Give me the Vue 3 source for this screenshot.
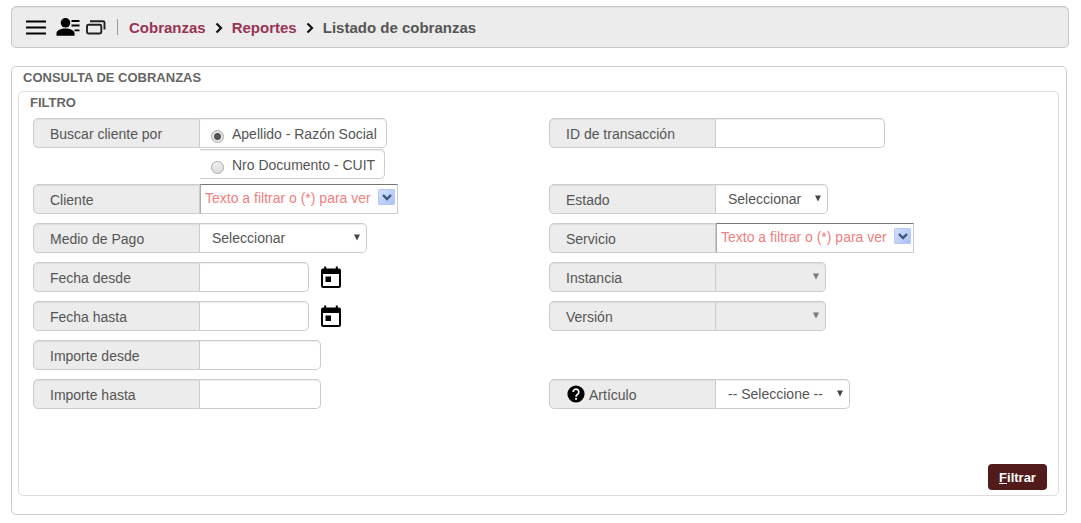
<script setup>
import { ref } from 'vue'

const searchBy = ref('apellido')
const searchOptions = [
  { id: 'apellido', text: 'Apellido - Razón Social' },
  { id: 'documento', text: 'Nro Documento - CUIT' },
]

const leftFields = [
  { id: 'cliente', label: 'Cliente', type: 'combo' },
  { id: 'medio', label: 'Medio de Pago', type: 'select', size: 'wide', text: 'Seleccionar' },
  { id: 'fecha-desde', label: 'Fecha desde', type: 'date' },
  { id: 'fecha-hasta', label: 'Fecha hasta', type: 'date' },
  { id: 'importe-desde', label: 'Importe desde', type: 'text', size: 'amount' },
  { id: 'importe-hasta', label: 'Importe hasta', type: 'text', size: 'amount' },
]

const rightFields = [
  { id: 'transaccion', label: 'ID de transacción', type: 'text', size: 'wide' },
  { id: 'estado', label: 'Estado', type: 'select', size: 'small', text: 'Seleccionar' },
  { id: 'servicio', label: 'Servicio', type: 'combo' },
  { id: 'instancia', label: 'Instancia', type: 'select', size: 'short', text: '', disabled: true },
  { id: 'version', label: 'Versión', type: 'select', size: 'short', text: '', disabled: true },
  { id: 'vacio', type: 'empty' },
  { id: 'articulo', label: 'Artículo', type: 'select', size: 'medium', text: '-- Seleccione --', help: true },
]

const columns = [leftFields, rightFields]
</script>

<template>
  <div class="page">
    <header class="topbar">
      <button class="icon-button menu" type="button" aria-label="Menú">
        <svg width="20" height="15" viewBox="0 0 20 15">
          <path d="M0 1.5h20M0 7.5h20M0 13.5h20" stroke="#000" stroke-width="2.2" />
        </svg>
      </button>
      <button class="icon-button user" type="button" aria-label="Usuario">
        <svg width="24" height="20" viewBox="0 0 24 20">
          <circle cx="9.5" cy="5.8" r="4.8" />
          <path d="M0.5 18.8v-2.6c0-3 4.5-4.7 9-4.7s9 1.7 9 4.7v2.6z" />
          <path d="M15.5 4h8M15.5 8.5h8M18.5 13.3h5" stroke="#000" stroke-width="1.8" />
        </svg>
      </button>
      <button class="icon-button windows" type="button" aria-label="Ventanas">
        <svg width="20" height="15" viewBox="0 0 20 15" fill="none" stroke="#222" stroke-width="1.9">
          <rect x="1" y="4.7" width="14.3" height="8.8" rx="1.5" />
          <path d="M4 1.3h13a1.5 1.5 0 0 1 1.5 1.5v6.7" />
        </svg>
      </button>
      <span class="divider"></span>
      <nav class="crumbs" aria-label="Ruta">
        <a href="#cobranzas">Cobranzas</a>
        <svg width="8" height="12" viewBox="0 0 8 12"><path d="M1.5 1.5L6 6L1.5 10.5" fill="none" stroke="#111" stroke-width="2.2" /></svg>
        <a href="#reportes">Reportes</a>
        <svg width="8" height="12" viewBox="0 0 8 12"><path d="M1.5 1.5L6 6L1.5 10.5" fill="none" stroke="#111" stroke-width="2.2" /></svg>
        <span>Listado de cobranzas</span>
      </nav>
    </header>

    <main class="panel">
      <h1 class="title">CONSULTA DE COBRANZAS</h1>
      <form class="filter" @submit.prevent>
        <h2 class="title">FILTRO</h2>
        <div class="columns">
          <div v-for="(fields, index) in columns" :key="index" class="column">
            <div v-if="index === 0" class="row first" role="radiogroup" aria-labelledby="buscar">
              <span id="buscar" class="label">Buscar cliente por</span>
              <div class="options">
                <label v-for="option in searchOptions" :key="option.id" class="option">
                  <input v-model="searchBy" type="radio" name="buscar" :value="option.id" />
                  <span>{{ option.text }}</span>
                </label>
              </div>
            </div>

            <div
              v-for="(field, n) in fields"
              :key="field.id"
              class="row"
              :class="{ first: index === 1 && n === 0 }"
            >
              <template v-if="field.type !== 'empty'">
                <label class="label" :for="field.id">
                  <svg v-if="field.help" class="help" width="18" height="18" viewBox="0 0 18 18">
                    <circle cx="9" cy="9" r="8.6" />
                    <path d="M6.2 7a2.8 2.8 0 1 1 4.8 1.9C9.9 9.9 9 10.3 9 11.8" fill="none" stroke="#fff" stroke-width="1.7" />
                    <rect x="8.1" y="13" width="1.8" height="1.8" fill="#fff" />
                  </svg>
                  {{ field.label }}
                </label>

                <div v-if="field.type === 'combo'" class="combo">
                  <input :id="field.id" type="text" placeholder="Texto a filtrar o (*) para ver" />
                  <button class="drop" type="button" :aria-label="'Ver ' + field.label">
                    <svg width="10" height="7" viewBox="0 0 10 7"><path d="M1 1l4 4l4-4" fill="none" stroke="#3f5577" stroke-width="2.4" /></svg>
                  </button>
                </div>

                <div v-else-if="field.type === 'select'" class="select" :class="field.size">
                  <select :id="field.id" :disabled="field.disabled">
                    <option>{{ field.text }}</option>
                  </select>
                  <svg class="arrow" width="6" height="7" viewBox="0 0 6 7"><path d="M0 0.5h6l-3 6z" /></svg>
                </div>

                <template v-else>
                  <input :id="field.id" class="text" :class="field.size" type="text" />
                  <button v-if="field.type === 'date'" class="icon-button calendar" type="button" :aria-label="'Calendario ' + field.label">
                    <svg width="22" height="23" viewBox="0 0 22 23">
                      <path d="M4.2 0.5h2v2h9.6v-2h2v2h1.2a2 2 0 0 1 2 2v15.5a2 2 0 0 1-2 2h-16a2 2 0 0 1-2-2v-15.5a2 2 0 0 1 2-2h1.2zM3 8v12h16v-12z" fill-rule="evenodd" />
                      <rect x="5.5" y="10.5" width="5.5" height="5.5" />
                    </svg>
                  </button>
                </template>
              </template>
            </div>
          </div>
        </div>
        <div class="actions">
          <button class="submit" type="submit"><u>F</u>iltrar</button>
        </div>
      </form>
    </main>
  </div>
</template>

<style>
body {
  background: #fff;
}
</style>

<style scoped>
.page {
  padding: 6px 12px 8px 11px;
  color: #555;
  font-family: "Liberation Sans", Arial, sans-serif;
  font-size: 14px;
  line-height: 20px;
}
.page * {
  box-sizing: border-box;
}
button,
input,
select {
  margin: 0;
  padding: 0;
  color: inherit;
  font: inherit;
}
svg {
  display: block;
  flex: none;
}
.topbar {
  display: flex;
  align-items: center;
  height: 42px;
  padding: 0 14px;
  border: 1px solid #c8c8c8;
  border-radius: 5px;
  background: #ececec;
  box-shadow: inset 0 1px 1px #ddd;
}
.icon-button {
  border: 0;
  background: none;
}
.user {
  margin-left: 10px;
}
.windows {
  margin-left: 6px;
}
.divider {
  width: 1px;
  height: 16px;
  margin: 0 11px;
  background: #999;
}
.crumbs {
  display: flex;
  align-items: center;
  gap: 9px;
  padding-top: 2px;
  font-size: 15px;
  font-weight: bold;
}
.crumbs a {
  color: #993355;
  text-decoration: none;
}
.panel {
  margin: 18px 2px 0 0;
  padding: 0 7px 18px 6px;
  border: 1px solid #ccc;
  border-radius: 5px;
}
.title {
  margin: 0;
  color: #666;
  font-size: 13px;
  font-weight: bold;
  line-height: 22px;
}
.panel > .title {
  padding: 0 5px;
}
.filter {
  margin-top: 2px;
  padding: 0 11px 5px;
  border: 1px solid #ddd;
  border-radius: 5px;
}
.columns {
  display: grid;
  grid-template-columns: 1fr 1fr;
  gap: 18px;
  margin-top: 4px;
  padding-left: 3px;
}
.row {
  display: flex;
  align-items: flex-start;
  height: 39px;
}
.row.first {
  height: 66px;
}
.label {
  display: flex;
  align-items: center;
  width: 167px;
  height: 30px;
  padding: 2px 16px 0;
  border: 1px solid #ccc;
  border-radius: 5px 0 0 5px;
  background: #ececec;
  box-shadow: inset 0 1px 1px #ddd;
}
.help {
  margin: 0 4px 2px 1px;
}
.option {
  display: flex;
  align-items: center;
  height: 30px;
  padding: 2px 9px 0 11px;
  border: 1px solid #ccc;
  border-left: 0;
  border-radius: 0 5px 5px 0;
  background: #fff;
  box-shadow: inset 0 1px 1px #eee;
}
.options {
  display: flex;
  flex-direction: column;
  align-items: flex-start;
  gap: 1px;
}
.option input {
  appearance: none;
  width: 13px;
  height: 13px;
  margin: 4px 8px 0 0;
  border: 1px solid #aaa;
  border-radius: 50%;
  background: linear-gradient(#eee, #ddd);
}
.option input:checked {
  background: radial-gradient(circle, #555 0 3px, #e4e4e4 4px);
}
.text {
  width: 109px;
  height: 30px;
  padding: 0 8px;
  border: 1px solid #ccc;
  border-left: 0;
  border-radius: 0 5px 5px 0;
  background: #fff;
  box-shadow: inset 0 1px 1px #eee;
}
.text.amount {
  width: 121px;
}
.text.wide {
  width: 169px;
}
.calendar {
  margin: 4px 0 0 11px;
}
.combo {
  position: relative;
  width: 198px;
}
.combo input {
  width: 100%;
  height: 30px;
  padding: 0 20px 2px 4px;
  border: 1px solid #ccc;
  border-top-color: #777;
  border-left-color: #aaa;
  border-radius: 0;
  background: #fff;
}
.combo input::placeholder {
  color: #f08080;
  opacity: 1;
}
.drop {
  position: absolute;
  top: 5px;
  right: 3px;
  display: grid;
  place-items: center;
  width: 17px;
  height: 16px;
  border: 1px solid #b5caf5;
  border-radius: 1px;
  background: linear-gradient(135deg, #d4e0fc, #a9c2f5);
}
.select {
  position: relative;
}
.select select {
  appearance: none;
  width: 100%;
  height: 30px;
  padding: 0 20px 0 12px;
  border: 1px solid #ccc;
  border-left: 0;
  border-radius: 0 5px 5px 0;
  background: #fff;
  box-shadow: inset 0 1px 1px #eee;
}
.select select:disabled {
  background: #ececec;
  box-shadow: inset 0 1px 1px #ddd;
  opacity: 1;
}
.select.wide {
  width: 167px;
}
.select.small {
  width: 112px;
}
.select.short {
  width: 110px;
}
.select.medium {
  width: 134px;
}
.arrow {
  position: absolute;
  top: 11px;
  right: 7px;
  fill: #444;
  pointer-events: none;
}
.short .arrow {
  fill: #777;
}
.actions {
  display: flex;
  justify-content: flex-end;
  margin-top: 46px;
}
.submit {
  width: 59px;
  height: 26px;
  padding-top: 2px;
  border: 0;
  border-radius: 4px;
  background: #521b1b;
  color: #fff;
  font-size: 13px;
  font-weight: bold;
}
</style>
